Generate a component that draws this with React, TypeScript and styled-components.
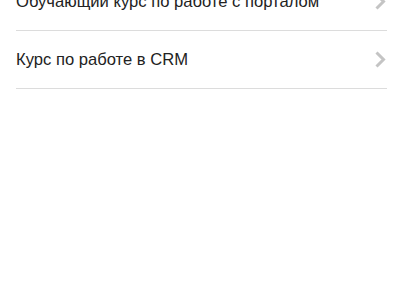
import React from "react";
import styled, { createGlobalStyle } from "styled-components";

const Global = createGlobalStyle`
  html, body { margin: 0; padding: 0; background: #fff; }
  body { font-family: "Liberation Sans", Arial, sans-serif; overflow: hidden; }
`;

const List = styled.ul`
  list-style: none;
  margin: -27px 0 0 0;
  padding: 0 16px;
`;

const Row = styled.li`
  display: flex;
  align-items: center;
  justify-content: space-between;
  height: 57px;
  border-bottom: 1px solid #dcdcdc;
`;

const Label = styled.span`
  font-size: 16.6px;
  color: #222;
`;

const Chevron = () => (
  <svg width="14" height="17" viewBox="0 0 14 17">
    <path d="M3.5 1.5 L10.5 8.5 L3.5 15.5" fill="none" stroke="#c4c4c4" strokeWidth="3" />
  </svg>
);

const items = ["Обучающий курс по работе с порталом", "Курс по работе в CRM"];

export default function App() {
  return (
    <>
      <Global />
      <List>
        {items.map((t) => (
          <Row key={t}>
            <Label>{t}</Label>
            <Chevron />
          </Row>
        ))}
      </List>
    </>
  );
}
